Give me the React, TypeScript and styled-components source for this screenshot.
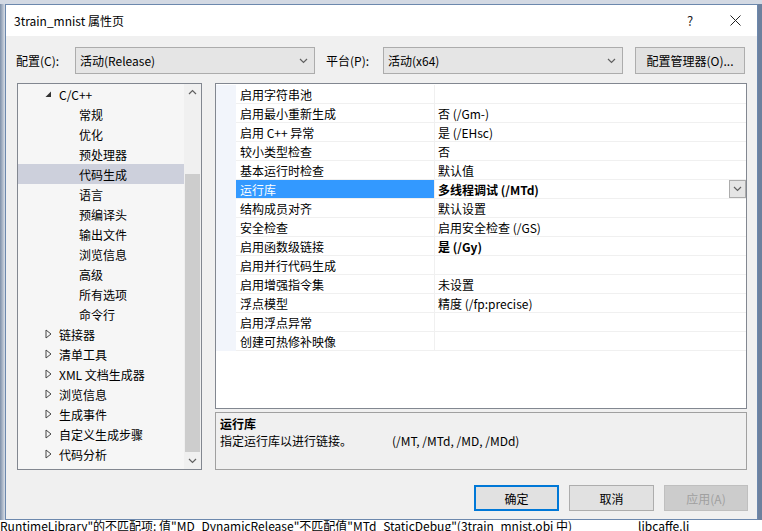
import styled, { createGlobalStyle } from "styled-components";

const GlobalStyle = createGlobalStyle`
  html, body {
    margin: 0;
    padding: 0;
    background: #c5cfdc;
  }
  body {
    font-family: "Noto Sans CJK SC", "Noto Sans", sans-serif;
    font-size: 12px;
    color: #000;
  }
`;

const Page = styled.div`
  width: 762px;
  height: 531px;
  overflow: hidden;
  display: flex;
  flex-direction: column;
  background: linear-gradient(to right, #7d8fa8 0, #d9dee6 5px, #d9dee6 757px, #6d819e 757px);
`;

const TopStrip = styled.div`
  height: 4px;
  background: #d3d9e3;
`;

const Dialog = styled.div`
  margin: 0 4px 0 5px;
  height: 516px;
  border: 1px solid #6c88ad;
  background: #f0f0f0;
  display: flex;
  flex-direction: column;
  box-sizing: border-box;
`;

const TitleBar = styled.div`
  height: 31px;
  flex-shrink: 0;
  background: #fff;
  display: flex;
  align-items: center;
  padding-left: 8px;
`;

const Title = styled.div`
  flex: 1;
  font-size: 12px;
`;

const TitleButton = styled.div<{ $w: number }>`
  width: ${(p) => p.$w}px;
  height: 31px;
  display: flex;
  align-items: center;
  justify-content: center;
  font-size: 13px;
  color: #222;
`;

const Body = styled.div`
  flex: 1;
  display: flex;
  flex-direction: column;
  padding: 11px 10px 0 11px;
`;

const ConfigRow = styled.div`
  display: flex;
  align-items: center;
  height: 27px;
  margin-left: -1px;
`;

const Label = styled.div<{ $w: number; $ml?: number }>`
  width: ${(p) => p.$w}px;
  margin-left: ${(p) => p.$ml ?? 0}px;
  flex-shrink: 0;
`;

const Select = styled.div`
  width: 240px;
  height: 27px;
  box-sizing: border-box;
  border: 1px solid #acacac;
  background: #e5e5e5;
  display: flex;
  align-items: center;
  padding: 0 6px 0 4px;
  justify-content: space-between;
`;

const Button = styled.div<{ $w: number; $h?: number; $primary?: boolean; $disabled?: boolean }>`
  width: ${(p) => p.$w}px;
  height: ${(p) => p.$h ?? 27}px;
  box-sizing: border-box;
  border: 1px solid ${(p) => (p.$primary ? "#0078d7" : p.$disabled ? "#bfbfbf" : "#adadad")};
  box-shadow: ${(p) => (p.$primary ? "inset 0 0 0 1px #0078d7" : "none")};
  background: ${(p) => (p.$disabled ? "#cccccc" : "#e1e1e1")};
  color: ${(p) => (p.$disabled ? "#a0a0a0" : "#000")};
  display: flex;
  align-items: center;
  justify-content: center;
  flex-shrink: 0;
`;

const Main = styled.div`
  display: flex;
  margin-top: 9px;
  height: 387px;
`;

const Tree = styled.div`
  width: 185px;
  box-sizing: border-box;
  border: 1px solid #828790;
  background: #f6f6f6;
  display: flex;
`;

const TreeList = styled.div`
  flex: 1;
`;

const TreeRow = styled.div<{ $selected?: boolean }>`
  height: 20px;
  display: flex;
  align-items: center;
  background: ${(p) => (p.$selected ? "#cdd0dc" : "transparent")};
`;

const Arrow = styled.div`
  width: 14px;
  margin-left: 27px;
  display: flex;
  align-items: center;
`;

const ChildLabel = styled.div`
  margin-left: 61px;
`;

const Scrollbar = styled.div`
  width: 17px;
  background: #f0f0f0;
  display: flex;
  flex-direction: column;
  align-items: center;
`;

const ScrollArrow = styled.div`
  height: 17px;
  width: 17px;
  display: flex;
  align-items: center;
  justify-content: center;
`;

const Thumb = styled.div`
  width: 15px;
  height: 279px;
  margin-top: 73px;
  background: #cdcdcd;
`;

const ScrollFill = styled.div`
  flex: 1;
`;

const RightCol = styled.div`
  flex: 1;
  margin-left: 13px;
  display: flex;
  flex-direction: column;
`;

const Grid = styled.div`
  height: 326px;
  box-sizing: border-box;
  border: 1px solid #828790;
  background: #fff;
  padding-top: 1px;
`;

const GridRow = styled.div`
  display: flex;
  height: 19px;
`;

const Gutter = styled.div`
  width: 20px;
  background: #f2f5fb;
  flex-shrink: 0;
`;

const NameCell = styled.div<{ $selected?: boolean }>`
  width: 199px;
  box-sizing: border-box;
  padding-left: 4px;
  border-bottom: 1px solid #f0f0f0;
  border-right: 1px solid #f0f0f0;
  background: ${(p) => (p.$selected ? "#3399ff" : "#fff")};
  color: ${(p) => (p.$selected ? "#fff" : "#000")};
  display: flex;
  align-items: center;
`;

const ValueCell = styled.div<{ $bold?: boolean }>`
  flex: 1;
  box-sizing: border-box;
  padding-left: 3px;
  border-bottom: 1px solid #f0f0f0;
  font-weight: ${(p) => (p.$bold ? 700 : 400)};
  display: flex;
  align-items: center;
  justify-content: space-between;
`;

const DropButton = styled.div`
  width: 17px;
  height: 18px;
  box-sizing: border-box;
  border: 1px solid #acacac;
  background: #e5e5e5;
  display: flex;
  align-items: center;
  justify-content: center;
`;

const Description = styled.div`
  margin-top: 3px;
  height: 58px;
  box-sizing: border-box;
  border: 1px solid #a0a0a0;
  background: #f0f0f0;
  padding: 2px 4px;
  line-height: 17px;
`;

const DescTitle = styled.div`
  font-weight: 700;
`;

const DescLine = styled.div`
  display: flex;
`;

const DescText = styled.div`
  width: 172px;
`;

const Footer = styled.div`
  display: flex;
  justify-content: flex-end;
  gap: 10px;
  margin-top: 15px;
  margin-right: -1px;
`;

const StatusLine = styled.div`
  flex: 1;
  background: #fff;
  display: flex;
  white-space: nowrap;
  font-size: 12px;
  line-height: 11px;
  overflow: hidden;
`;

const StatusTail = styled.div`
  margin-left: 66px;
`;

const Chevron = ({ up, color = "#606060" }: { up?: boolean; color?: string }) => (
  <svg width="9" height="6" viewBox="0 0 9 6">
    <polyline
      points={up ? "1,5 4.5,1.5 8,5" : "1,1 4.5,4.5 8,1"}
      fill="none"
      stroke={color}
      strokeWidth="1.2"
    />
  </svg>
);

const ExpandedArrow = () => (
  <svg width="7" height="7" viewBox="0 0 7 7">
    <polygon points="6,0.5 6,6 0.5,6" fill="#333" />
  </svg>
);

const CollapsedArrow = () => (
  <svg width="7" height="10" viewBox="0 0 7 10">
    <polygon points="1,1 6,5 1,9" fill="none" stroke="#444" strokeWidth="1" />
  </svg>
);

const CloseIcon = () => (
  <svg width="11" height="11" viewBox="0 0 11 11">
    <path d="M0.5 0.5 L10.5 10.5 M10.5 0.5 L0.5 10.5" stroke="#222" strokeWidth="1" />
  </svg>
);

type TreeItem = { label: string; level: 1 | 2; expanded?: boolean; selected?: boolean };

const treeItems: TreeItem[] = [
  { label: "C/C++", level: 1, expanded: true },
  { label: "常规", level: 2 },
  { label: "优化", level: 2 },
  { label: "预处理器", level: 2 },
  { label: "代码生成", level: 2, selected: true },
  { label: "语言", level: 2 },
  { label: "预编译头", level: 2 },
  { label: "输出文件", level: 2 },
  { label: "浏览信息", level: 2 },
  { label: "高级", level: 2 },
  { label: "所有选项", level: 2 },
  { label: "命令行", level: 2 },
  { label: "链接器", level: 1 },
  { label: "清单工具", level: 1 },
  { label: "XML 文档生成器", level: 1 },
  { label: "浏览信息", level: 1 },
  { label: "生成事件", level: 1 },
  { label: "自定义生成步骤", level: 1 },
  { label: "代码分析", level: 1 },
];

type Prop = { name: string; value?: string; bold?: boolean; selected?: boolean };

const props: Prop[] = [
  { name: "启用字符串池" },
  { name: "启用最小重新生成", value: "否 (/Gm-)" },
  { name: "启用 C++ 异常", value: "是 (/EHsc)" },
  { name: "较小类型检查", value: "否" },
  { name: "基本运行时检查", value: "默认值" },
  { name: "运行库", value: "多线程调试 (/MTd)", bold: true, selected: true },
  { name: "结构成员对齐", value: "默认设置" },
  { name: "安全检查", value: "启用安全检查 (/GS)" },
  { name: "启用函数级链接", value: "是 (/Gy)", bold: true },
  { name: "启用并行代码生成" },
  { name: "启用增强指令集", value: "未设置" },
  { name: "浮点模型", value: "精度 (/fp:precise)" },
  { name: "启用浮点异常" },
  { name: "创建可热修补映像" },
];

export default function App() {
  return (
    <>
      <GlobalStyle />
      <Page>
        <TopStrip />
        <Dialog>
          <TitleBar>
            <Title>3train_mnist 属性页</Title>
            <TitleButton $w={46}>?</TitleButton>
            <TitleButton $w={44}>
              <CloseIcon />
            </TitleButton>
          </TitleBar>
          <Body>
            <ConfigRow>
              <Label $w={59}>配置(C):</Label>
              <Select>
                <span>活动(Release)</span>
                <Chevron />
              </Select>
              <Label $w={57} $ml={11}>
                平台(P):
              </Label>
              <Select>
                <span>活动(x64)</span>
                <Chevron />
              </Select>
              <Label $w={12} />
              <Button $w={110}>配置管理器(O)...</Button>
            </ConfigRow>
            <Main>
              <Tree>
                <TreeList>
                  {treeItems.map((item, i) => (
                    <TreeRow key={i} $selected={item.selected}>
                      {item.level === 1 ? (
                        <>
                          <Arrow>{item.expanded ? <ExpandedArrow /> : <CollapsedArrow />}</Arrow>
                          <span>{item.label}</span>
                        </>
                      ) : (
                        <ChildLabel>{item.label}</ChildLabel>
                      )}
                    </TreeRow>
                  ))}
                </TreeList>
                <Scrollbar>
                  <ScrollArrow>
                    <Chevron up />
                  </ScrollArrow>
                  <Thumb />
                  <ScrollFill />
                  <ScrollArrow>
                    <Chevron />
                  </ScrollArrow>
                </Scrollbar>
              </Tree>
              <RightCol>
                <Grid>
                  {props.map((p, i) => (
                    <GridRow key={i}>
                      <Gutter />
                      <NameCell $selected={p.selected}>{p.name}</NameCell>
                      <ValueCell $bold={p.bold}>
                        <span>{p.value ?? ""}</span>
                        {p.selected && (
                          <DropButton>
                            <Chevron />
                          </DropButton>
                        )}
                      </ValueCell>
                    </GridRow>
                  ))}
                </Grid>
                <Description>
                  <DescTitle>运行库</DescTitle>
                  <DescLine>
                    <DescText>指定运行库以进行链接。</DescText>
                    <span>(/MT, /MTd, /MD, /MDd)</span>
                  </DescLine>
                </Description>
              </RightCol>
            </Main>
            <Footer>
              <Button $w={85} $h={26} $primary>
                确定
              </Button>
              <Button $w={85} $h={26}>
                取消
              </Button>
              <Button $w={84} $h={26} $disabled>
                应用(A)
              </Button>
            </Footer>
          </Body>
        </Dialog>
        <StatusLine>
          <span>RuntimeLibrary"的不匹配项: 值"MD_DynamicRelease"不匹配值"MTd_StaticDebug"(3train_mnist.obj 中)</span>
          <StatusTail>libcaffe.li</StatusTail>
        </StatusLine>
      </Page>
    </>
  );
}
